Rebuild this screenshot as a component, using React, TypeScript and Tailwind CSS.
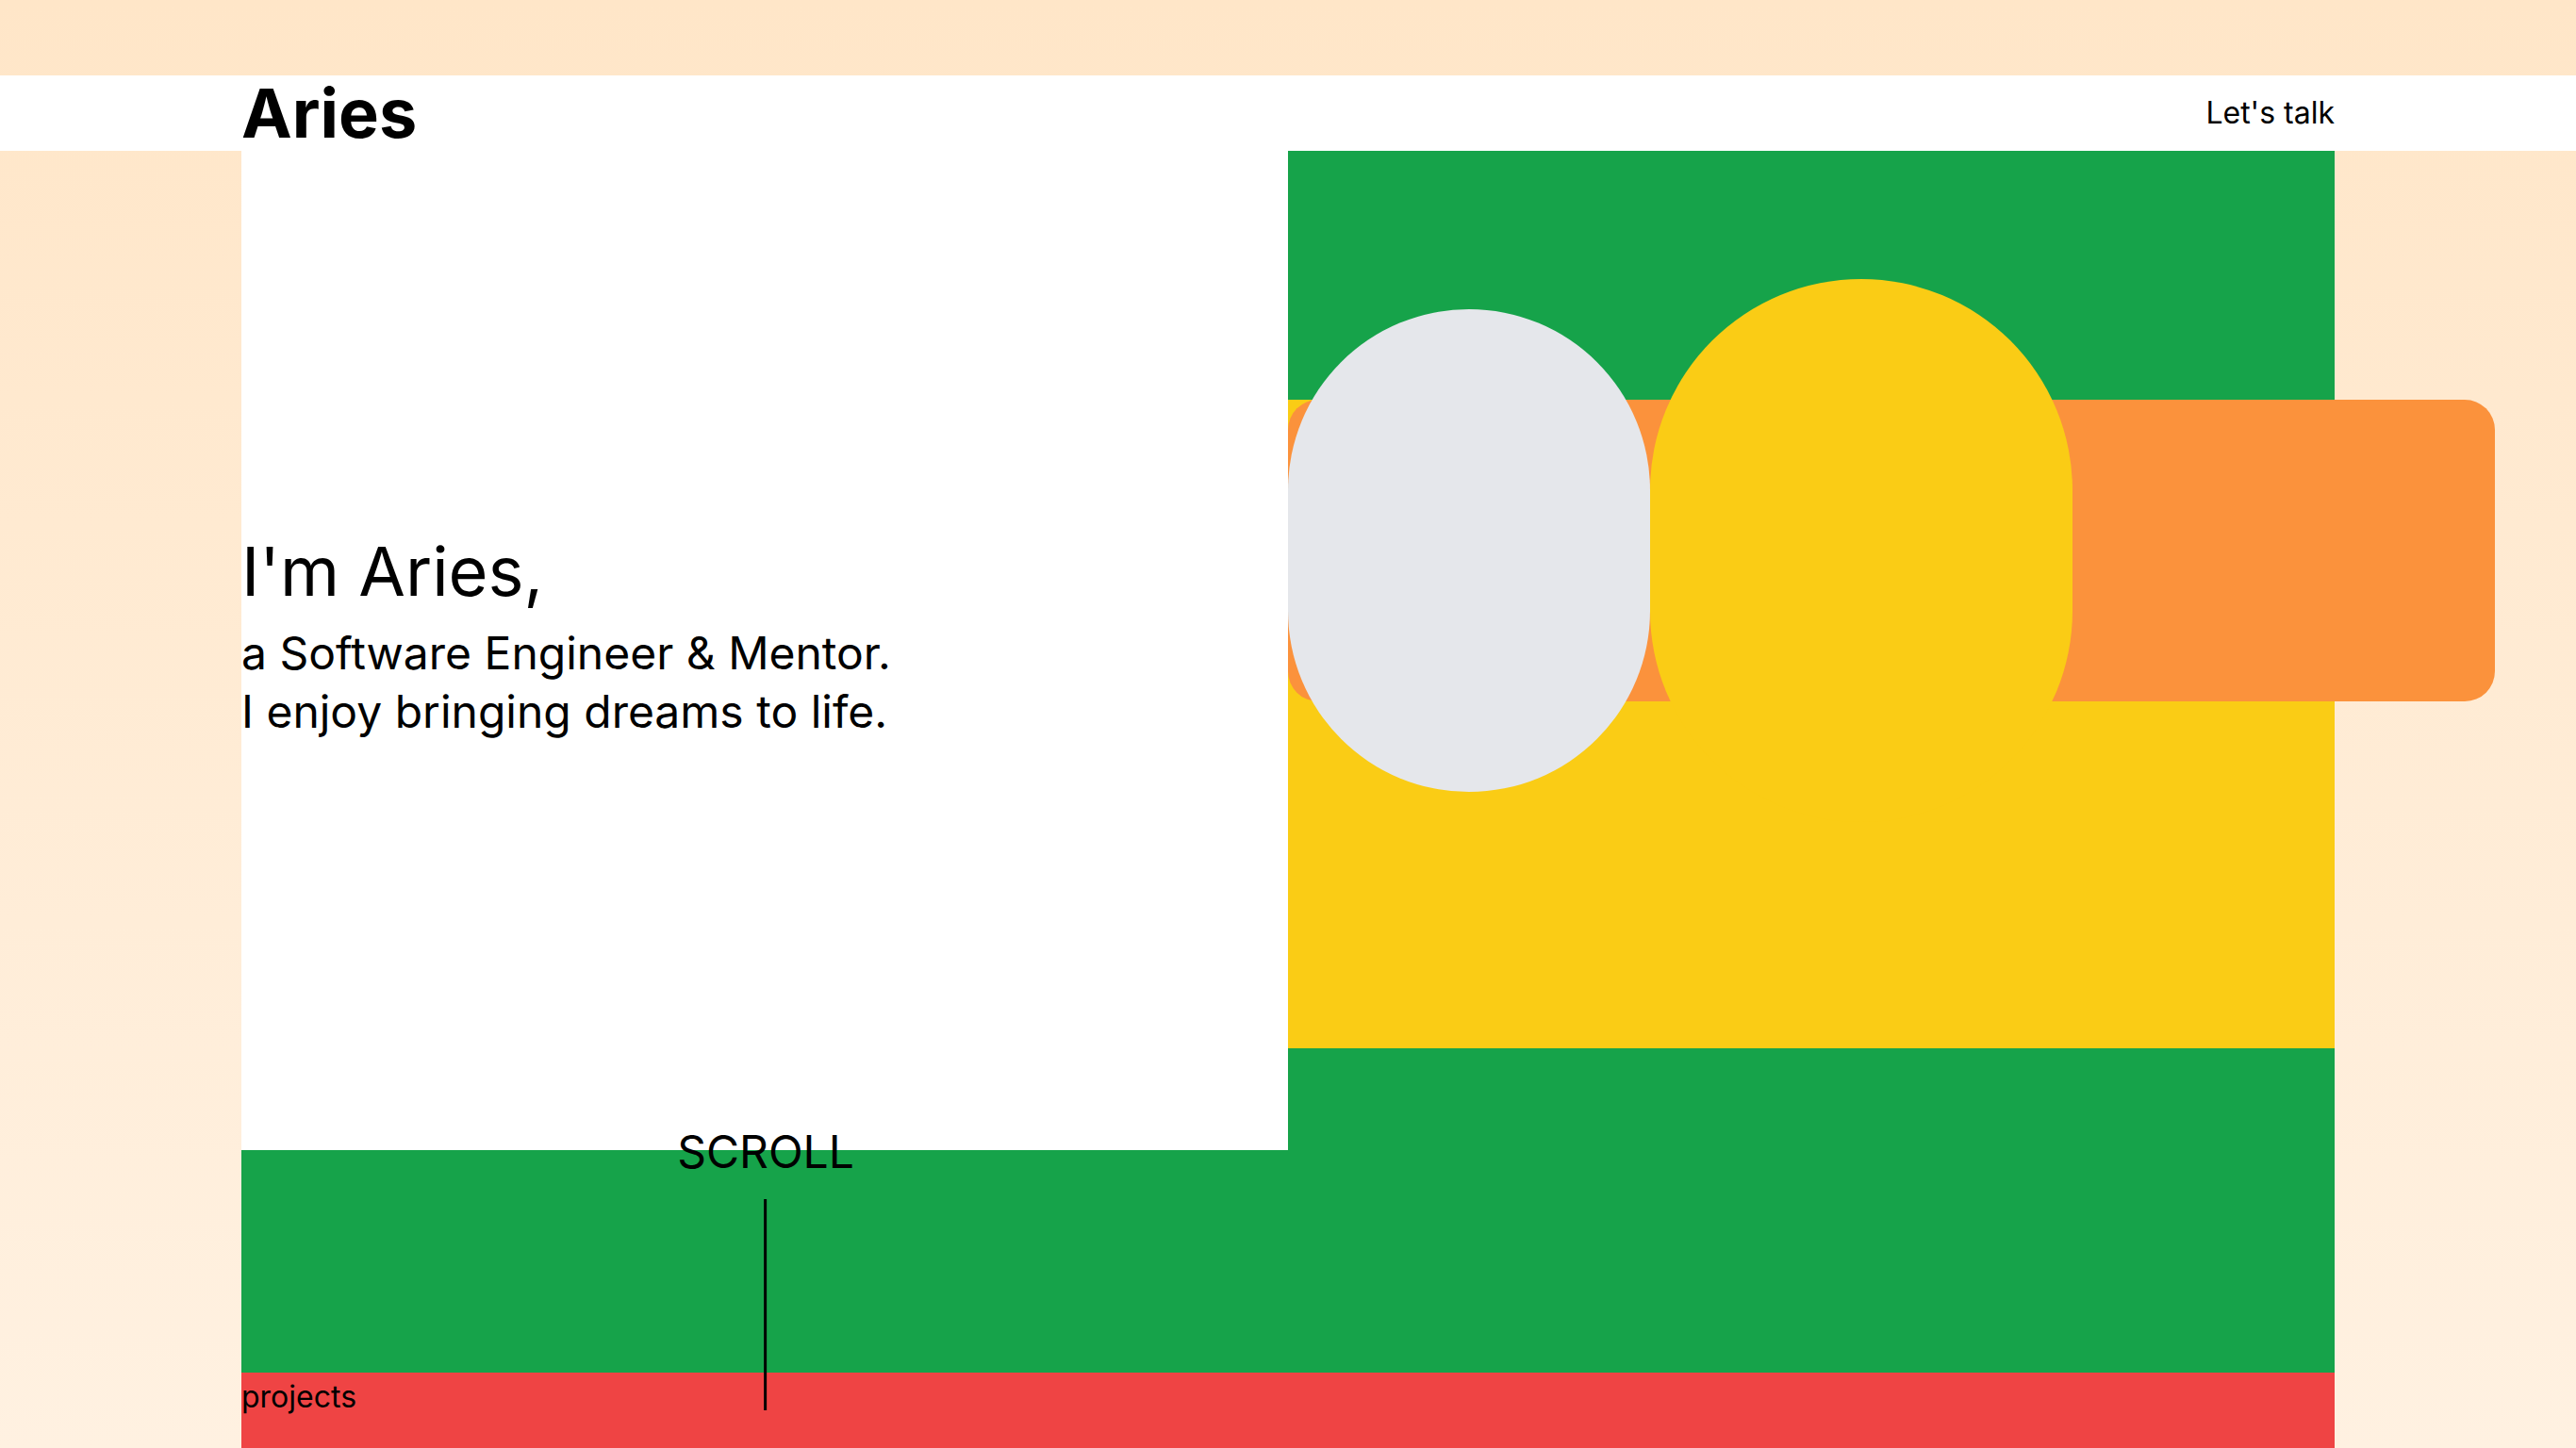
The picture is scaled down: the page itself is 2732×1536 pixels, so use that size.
import React from 'react';

const Header = () => {
  return (
    <header className="h-20 bg-white">
      <div className="mx-auto flex h-full w-[2220px] items-center justify-between">
        <span className="text-7xl leading-none font-bold">Aries</span>
        <a href="#contact" className="text-[32px] leading-none">
          Let's talk
        </a>
      </div>
    </header>
  );
};

const Shapes = () => {
  return (
    <div className="relative bg-[#16a34a] pt-[264px]">
      <div className="h-[688px] bg-[#facc15]">
        {/* the orange bar runs past the column on purpose */}
        <div className="h-[320px] w-[1280px] rounded-[32px] bg-[#fb923c]" />
      </div>
      <div className="absolute top-[168px] left-0 h-[512px] w-[384px] rounded-full bg-[#e5e7eb]" />
      <div className="absolute top-[136px] left-[384px] h-[576px] w-[448px] rounded-full bg-[#facc15]" />
    </div>
  );
};

const App = () => {
  return (
    <div
      className="min-h-screen overflow-hidden bg-linear-to-b from-[#ffe6c8] to-[#fff1e1] pt-20 text-black"
      style={{ fontFamily: 'Inter, "Noto Sans", sans-serif' }}
    >
      <Header />
      <main className="relative mx-auto w-[2220px]">
        <section className="grid h-[1060px] grid-cols-2">
          <div className="bg-white pt-[410px]">
            <h1 className="mb-[20px] text-7xl leading-none font-normal">I'm Aries,</h1>
            <p className="text-5xl leading-[1.3]">
              a Software Engineer &amp; Mentor.
              <br />I enjoy bringing dreams to life.
            </p>
          </div>
          <Shapes />
        </section>
        <div className="h-[236px] bg-[#16a34a]" />
        <div className="h-20 bg-[#ef4444] pt-[2px]">
          <span className="text-[32px]">projects</span>
        </div>

        {/* scroll hint sits across the white / green edge */}
        <div className="absolute top-[1038px] left-[556px] flex -translate-x-1/2 flex-col items-center">
          <span className="text-5xl leading-none">SCROLL</span>
          <div className="mt-[26px] h-[224px] w-[3px] bg-black" />
        </div>
      </main>
    </div>
  );
};

export default App;
